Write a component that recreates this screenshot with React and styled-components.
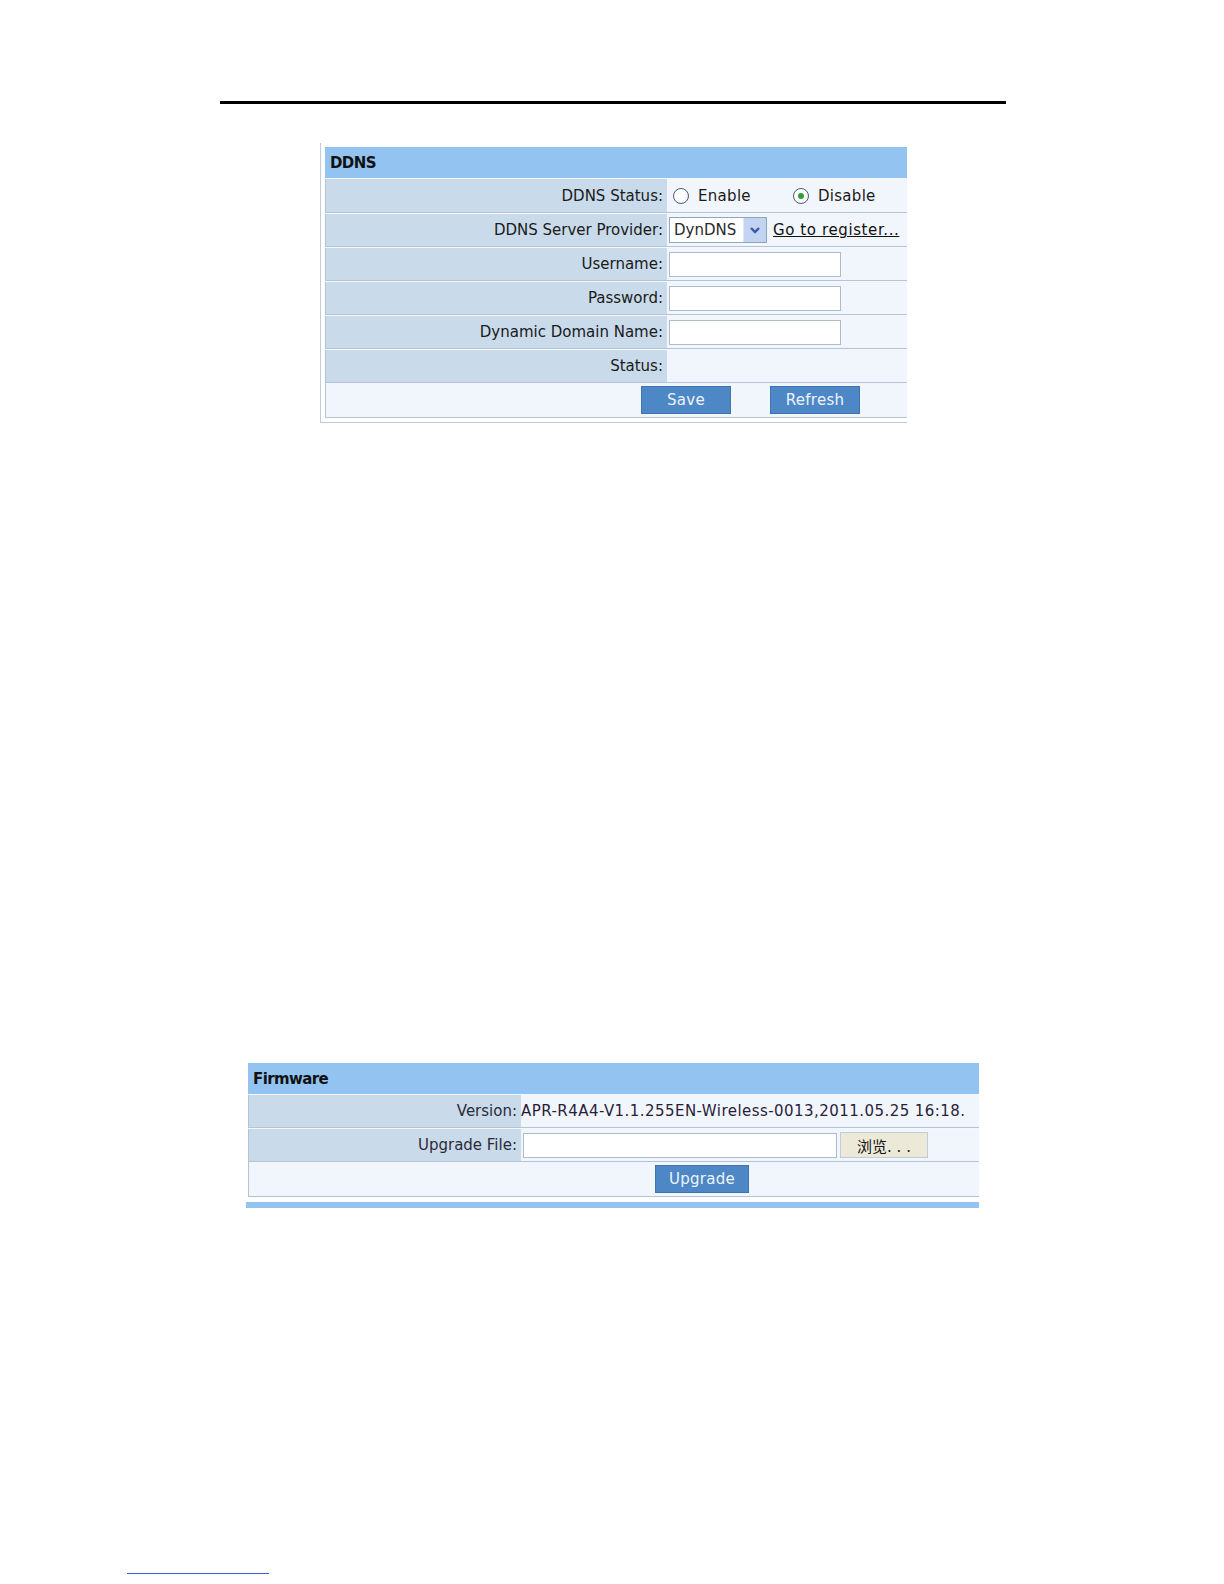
import React from 'react';
import styled, { createGlobalStyle } from 'styled-components';

const GlobalStyle = createGlobalStyle`
  html, body {
    margin: 0;
    padding: 0;
    background: #ffffff;
  }
  body {
    font-family: "DejaVu Sans", Verdana, sans-serif;
    color: #1a1a1a;
  }
`;

const Page = styled.div`
  width: 1224px;
  min-height: 1584px;
  padding-top: 101px;
  box-sizing: border-box;
`;

const TopRule = styled.div`
  margin-left: 220px;
  width: 786px;
  height: 3px;
  background: #000;
`;

const Panel = styled.section`
  margin-left: ${(p) => p.left}px;
  width: ${(p) => p.width}px;
  box-sizing: border-box;
  ${(p) =>
    p.framed &&
    `
    border-left: 1px solid #c2ccd6;
    border-bottom: 1px solid #c2ccd6;
    padding: 4px 0 4px 4px;
  `}
`;

const Header = styled.div`
  height: 31px;
  background: #93c4f1;
  display: flex;
  align-items: center;
  padding-left: 5px;
  font-weight: bold;
  font-size: 15px;
  letter-spacing: -0.6px;
  color: #111;
`;

const Row = styled.div`
  display: grid;
  grid-template-columns: ${(p) => p.label}px 1fr;
  height: ${(p) => p.h || 34}px;
  box-sizing: border-box;
  border-top: 1px solid #f4f8fc;
  border-bottom: 1px solid #b4c4d4;
`;

const Label = styled.div`
  background: #c9dbeb;
  border-left: 1px solid #b4c4d4;
  display: flex;
  align-items: center;
  justify-content: flex-end;
  padding-right: 4px;
  font-size: 15px;
  color: ${(p) => p.color || '#1a1a1a'};
  white-space: nowrap;
`;

const Value = styled.div`
  background: #f0f6fc;
  display: flex;
  align-items: center;
  padding-left: ${(p) => p.pad ?? 1}px;
  font-size: 15px;
  white-space: nowrap;
  overflow: hidden;
`;

const ButtonRow = styled.div`
  height: ${(p) => p.h || 35}px;
  box-sizing: border-box;
  background: #f0f6fc;
  border-left: 1px solid #b4c4d4;
  border-bottom: 1px solid #b4c4d4;
  display: flex;
  align-items: center;
  gap: 39px;
  padding-left: ${(p) => p.pad}px;
`;

const BlueButton = styled.button`
  width: ${(p) => p.w}px;
  height: 28px;
  background: #4d87c6;
  border: 1px solid #3f73ad;
  color: #eef4fb;
  font-family: "DejaVu Sans", Verdana, sans-serif;
  font-size: 15px;
  letter-spacing: 0.3px;
  padding: 0;
`;

const RadioGroup = styled.label`
  display: flex;
  align-items: center;
  gap: 9px;
  margin-left: ${(p) => p.ml}px;
  font-size: 15px;
  letter-spacing: 0.3px;
`;

const RadioDot = styled.span`
  width: 16px;
  height: 16px;
  box-sizing: border-box;
  border-radius: 50%;
  border: 1px solid #4d5d6d;
  background: radial-gradient(circle at 40% 40%, #ffffff 40%, #e2e6ea 100%);
  display: flex;
  align-items: center;
  justify-content: center;
  &::after {
    content: '';
    width: 6px;
    height: 6px;
    border-radius: 50%;
    background: ${(p) => (p.checked ? '#2f9e35' : 'transparent')};
  }
`;

const Select = styled.div`
  width: 98px;
  height: 26px;
  box-sizing: border-box;
  border: 1px solid #8fa6bd;
  background: #fff;
  display: flex;
  align-items: stretch;
  margin-left: 1px;
`;

const SelectText = styled.span`
  flex: 1;
  display: flex;
  align-items: center;
  padding-left: 4px;
  font-size: 15px;
  color: #2a2a2a;
`;

const SelectArrow = styled.span`
  width: 22px;
  background: #c3d3f2;
  border-left: 1px solid #dfe8f7;
  display: flex;
  align-items: center;
  justify-content: center;
`;

const RegisterLink = styled.a`
  margin-left: 6px;
  font-size: 15px;
  letter-spacing: 0.6px;
  color: #111;
  text-decoration: underline;
`;

const TextInput = styled.input`
  width: ${(p) => p.w}px;
  height: 25px;
  box-sizing: border-box;
  border: 1px solid #adbccb;
  background: #fff;
  margin: 0 0 0 1px;
  padding: 0 3px;
`;

const BrowseButton = styled.button`
  width: 88px;
  height: 26px;
  margin-left: 3px;
  background: #ece9d8;
  border: 1px solid #bccddd;
  font-family: "DejaVu Sans", "Noto Sans CJK SC", sans-serif;
  font-size: 15px;
  color: #111;
  padding: 0;
`;

const VersionText = styled.span`
  font-size: 15px;
  letter-spacing: 0.45px;
  color: #2b1d3a;
`;

const BottomBar = styled.div`
  margin: 5px 0 0 -2px;
  height: 6px;
  background: #93c4f1;
`;

const FootLink = styled.div`
  margin: 365px 0 0 127px;
  width: 142px;
  height: 1px;
  background: #3b5bd6;
`;

const Chevron = () => (
  <svg width="12" height="9" viewBox="0 0 12 9">
    <path d="M2 2 L6 6 L10 2" stroke="#3a5aa8" strokeWidth="2.4" fill="none" />
  </svg>
);

const Spacer = styled.div`
  height: ${(p) => p.h}px;
`;

export default function App() {
  return (
    <Page>
      <GlobalStyle />
      <TopRule />
      <Spacer h={39} />

      <Panel framed left={320} width={587}>
        <Header>DDNS</Header>
        <Row label={342} h={35}>
          <Label>DDNS Status:</Label>
          <Value pad={6}>
            <RadioGroup ml={0}>
              <RadioDot />
              Enable
            </RadioGroup>
            <RadioGroup ml={42}>
              <RadioDot checked />
              Disable
            </RadioGroup>
          </Value>
        </Row>
        <Row label={342}>
          <Label>DDNS Server Provider:</Label>
          <Value>
            <Select>
              <SelectText>DynDNS</SelectText>
              <SelectArrow>
                <Chevron />
              </SelectArrow>
            </Select>
            <RegisterLink>Go to register...</RegisterLink>
          </Value>
        </Row>
        <Row label={342}>
          <Label>Username:</Label>
          <Value>
            <TextInput w={172} />
          </Value>
        </Row>
        <Row label={342}>
          <Label>Password:</Label>
          <Value>
            <TextInput w={172} type="password" />
          </Value>
        </Row>
        <Row label={342}>
          <Label>Dynamic Domain Name:</Label>
          <Value>
            <TextInput w={172} />
          </Value>
        </Row>
        <Row label={342}>
          <Label>Status:</Label>
          <Value />
        </Row>
        <ButtonRow pad={315}>
          <BlueButton w={90}>Save</BlueButton>
          <BlueButton w={90}>Refresh</BlueButton>
        </ButtonRow>
      </Panel>

      <Spacer h={640} />

      <Panel left={248} width={731}>
        <Header>Firmware</Header>
        <Row label={273}>
          <Label color="#2e2a36">Version:</Label>
          <Value pad={0}>
            <VersionText>APR-R4A4-V1.1.255EN-Wireless-0013,2011.05.25 16:18.</VersionText>
          </Value>
        </Row>
        <Row label={273}>
          <Label color="#2e2a36">Upgrade File:</Label>
          <Value>
            <TextInput w={314} />
            <BrowseButton>浏览. . .</BrowseButton>
          </Value>
        </Row>
        <ButtonRow pad={406} h={35}>
          <BlueButton w={94}>Upgrade</BlueButton>
        </ButtonRow>
        <BottomBar />
      </Panel>

      <FootLink />
    </Page>
  );
}
